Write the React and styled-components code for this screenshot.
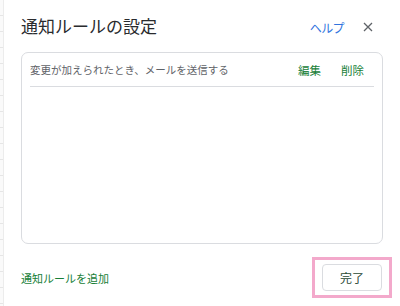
import styled, { createGlobalStyle } from 'styled-components'

const GlobalStyle = createGlobalStyle`
  html, body {
    margin: 0;
    padding: 0;
    background: #ffffff;
  }
  body {
    font-family: Roboto, "Noto Sans CJK JP", sans-serif;
  }
`

const Page = styled.div`
  display: flex;
  width: 400px;
  height: 306px;
  overflow: hidden;
`

const Gutter = styled.div`
  width: 3px;
  flex-shrink: 0;
  border-right: 1px solid #ececec;
  background: repeating-linear-gradient(
    to bottom,
    #fafafa 0px,
    #fafafa 15px,
    #e6e6e6 15px,
    #e6e6e6 16px
  );
`

const Dialog = styled.div`
  flex: 1;
  display: flex;
  flex-direction: column;
  padding: 17px 17px 15px 17px;
  box-sizing: border-box;
`

const Header = styled.div`
  display: flex;
  align-items: center;
  justify-content: space-between;
  height: 20px;
  margin-bottom: 15px;
`

const Title = styled.h1`
  margin: 0;
  font-size: 17px;
  font-weight: 400;
  color: #2a2b2e;
  line-height: 20px;
`

const HeaderActions = styled.div`
  display: flex;
  align-items: center;
  gap: 18px;
  margin-right: 9px;
`

const HelpLink = styled.a`
  font-size: 12px;
  color: #3174de;
  text-decoration: none;
  letter-spacing: -0.6px;
`

const CloseButton = styled.button`
  display: flex;
  align-items: center;
  justify-content: center;
  width: 12px;
  height: 12px;
  padding: 0;
  border: none;
  background: none;
`

const RuleBox = styled.div`
  flex: 1;
  border: 1px solid #dadce0;
  border-radius: 7px;
  padding: 0 8px;
`

const RuleRow = styled.div`
  display: flex;
  align-items: center;
  height: 33px;
  border-bottom: 1px solid #dadce0;
`

const RuleText = styled.span`
  flex: 1;
  font-size: 10.5px;
  color: #5f6368;
`

const RuleAction = styled.button`
  border: none;
  background: none;
  padding: 0 ${p => (p.$last ? '10px' : '12px')} 0 8px;
  font-family: inherit;
  font-size: 11.5px;
  color: #188038;
`

const Footer = styled.div`
  display: flex;
  align-items: center;
  justify-content: space-between;
  margin-top: 20px;
`

const AddLink = styled.a`
  font-size: 11px;
  color: #188038;
  text-decoration: none;
`

const Highlight = styled.div`
  position: relative;
  margin-right: 1px;

  &::after {
    content: '';
    position: absolute;
    inset: -7px -10px;
    border: 3px solid #f3a9cb;
    pointer-events: none;
  }
`

const DoneButton = styled.button`
  width: 60px;
  height: 27px;
  border: 1px solid #dadce0;
  border-radius: 4px;
  background: #ffffff;
  font-family: inherit;
  font-size: 12px;
  color: #2b4a35;
`

export default function App() {
  return (
    <>
      <GlobalStyle />
      <Page>
        <Gutter />
        <Dialog>
          <Header>
            <Title>通知ルールの設定</Title>
            <HeaderActions>
              <HelpLink href="#">ヘルプ</HelpLink>
              <CloseButton aria-label="閉じる">
                <svg width="10" height="10" viewBox="0 0 10 10">
                  <path d="M1 1L9 9M9 1L1 9" stroke="#5f6368" strokeWidth="1.3" />
                </svg>
              </CloseButton>
            </HeaderActions>
          </Header>
          <RuleBox>
            <RuleRow>
              <RuleText>変更が加えられたとき、メールを送信する</RuleText>
              <RuleAction>編集</RuleAction>
              <RuleAction $last>削除</RuleAction>
            </RuleRow>
          </RuleBox>
          <Footer>
            <AddLink href="#">通知ルールを追加</AddLink>
            <Highlight>
              <DoneButton>完了</DoneButton>
            </Highlight>
          </Footer>
        </Dialog>
      </Page>
    </>
  )
}
